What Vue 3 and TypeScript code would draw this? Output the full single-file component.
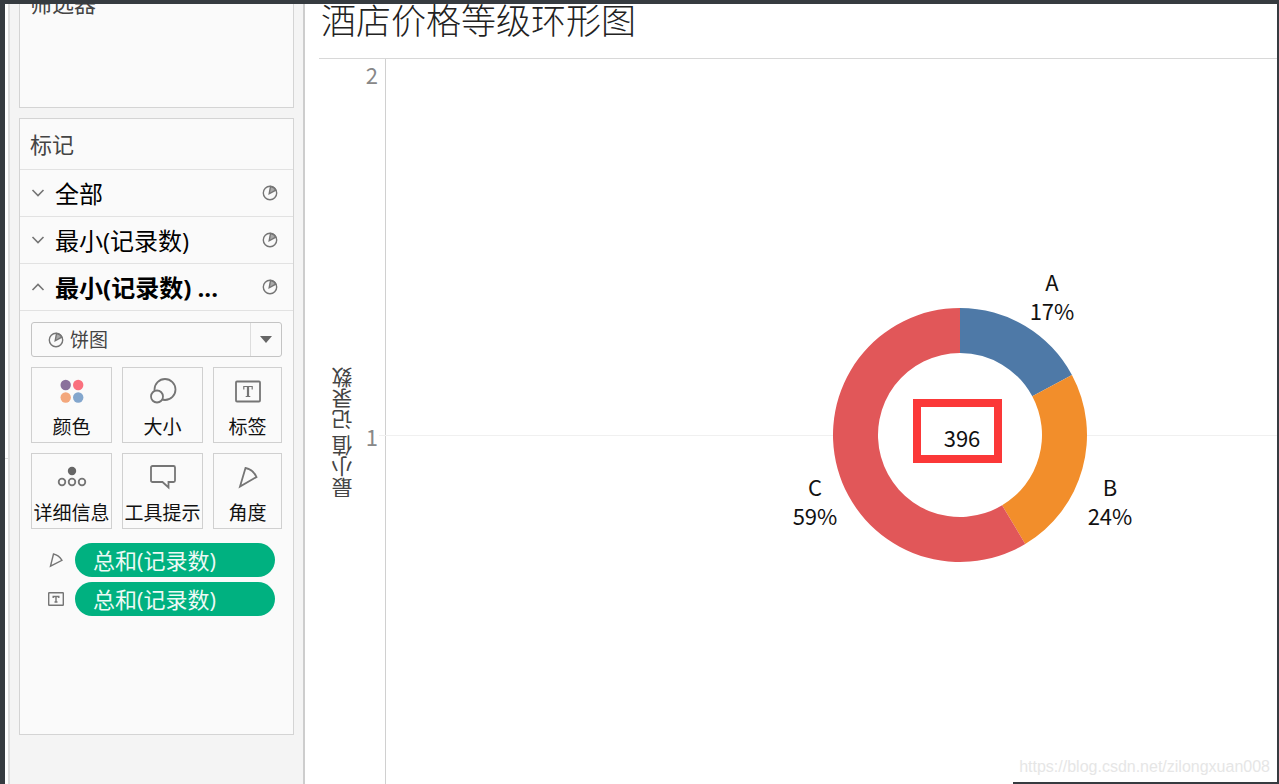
<script setup lang="ts">
import { ref } from 'vue'

interface Slice { name: string; count: number; color: string; x: number; y: number }
interface Shelf { id: number; label: string; open: boolean }
interface Tool { icon: string; label: string }

const shelves = ref<Shelf[]>([
  { id: 1, label: '全部', open: false },
  { id: 2, label: '最小(记录数)', open: false },
  { id: 3, label: '最小(记录数) ...', open: true },
])

const tools: Tool[] = [
  { icon: 'color', label: '颜色' },
  { icon: 'size', label: '大小' },
  { icon: 'label', label: '标签' },
  { icon: 'detail', label: '详细信息' },
  { icon: 'tooltip', label: '工具提示' },
  { icon: 'angle', label: '角度' },
]

const pills: Tool[] = [
  { icon: 'angle', label: '总和(记录数)' },
  { icon: 'label', label: '总和(记录数)' },
]

const markType = ref('pie')

const slices: Slice[] = [
  { name: 'A', count: 68, color: '#4e79a7', x: 92, y: -144 },
  { name: 'B', count: 96, color: '#f28e2b', x: 150, y: 61 },
  { name: 'C', count: 232, color: '#e15759', x: -145, y: 61 },
]
const total = slices.reduce((sum, s) => sum + s.count, 0)
const OUTER = 127
const INNER = 82

function point(radius: number, share: number): string {
  const a = share * Math.PI * 2
  return `${(radius * Math.sin(a)).toFixed(2)} ${(-radius * Math.cos(a)).toFixed(2)}`
}

let running = 0
const arcs = slices.map((s) => {
  const from = running / total
  running += s.count
  const to = running / total
  const large = to - from > 0.5 ? 1 : 0
  return {
    ...s,
    percent: `${Math.round((s.count / total) * 100)}%`,
    d: `M${point(OUTER, from)}A${OUTER} ${OUTER} 0 ${large} 1 ${point(OUTER, to)}L${point(INNER, to)}A${INNER} ${INNER} 0 ${large} 0 ${point(INNER, from)}Z`,
  }
})
</script>

<template>
  <div class="window">
    <div class="gutter"></div>
    <aside class="sidebar">
      <section class="card filters">
        <h2 class="card-title">筛选器</h2>
      </section>
      <section class="card marks">
        <h2 class="card-title">标记</h2>
        <button
          v-for="s in shelves"
          :key="s.id"
          type="button"
          class="shelf"
          :class="{ open: s.open }"
          :aria-expanded="s.open"
        >
          <svg class="chevron" viewBox="0 0 14 8" aria-hidden="true">
            <path :d="s.open ? 'M1.5 7 7 1.5 12.500 7' : 'M1.5 1 7 6.500 12.500 1'" />
          </svg>
          <span class="shelf-name">{{ s.label }}</span>
          <svg class="pie" viewBox="0 0 16 16" aria-hidden="true">
            <circle cx="8" cy="8" r="6.700" />
            <path class="wedge" d="M8.500 1.500 7.200 8.800 13.800 5.200A6.500 6.500 0 0 0 8.500 1.500Z" />
          </svg>
        </button>
        <div class="marks-body">
          <div class="type-picker">
            <svg class="pie" viewBox="0 0 16 16" aria-hidden="true">
              <circle cx="8" cy="8" r="6.700" />
              <path class="wedge" d="M8.500 1.500 7.200 8.800 13.800 5.200A6.500 6.500 0 0 0 8.500 1.500Z" />
            </svg>
            <select v-model="markType" aria-label="标记类型">
              <option value="pie">饼图</option>
            </select>
            <span class="arrow"><svg viewBox="0 0 12 7" aria-hidden="true"><path d="M0 0h12L6 7Z" /></svg></span>
          </div>
          <div class="tools">
            <button v-for="t in tools" :key="t.label" type="button" class="tool">
              <svg class="tool-icon" viewBox="0 0 30 28" aria-hidden="true">
                <g v-if="t.icon === 'color'" class="dots">
                  <circle cx="8.700" cy="8" r="5.200" fill="#8a719c" />
                  <circle cx="21.200" cy="8" r="5.200" fill="#fa707e" />
                  <circle cx="8.700" cy="20.500" r="5.200" fill="#f3a77c" />
                  <circle cx="21.200" cy="20.500" r="5.200" fill="#83a6cd" />
                </g>
                <g v-else-if="t.icon === 'size'">
                  <circle cx="17" cy="12.500" r="10.500" />
                  <circle class="cover" cx="9" cy="19.500" r="6" />
                </g>
                <g v-else-if="t.icon === 'label'">
                  <rect x="3" y="4.500" width="24" height="20" rx="1" />
                  <path class="thin" d="M10.800 12.500v-3h8.400v3M12.700 19.500h4.600" />
                  <path class="stem" d="M15 9.500v10" />
                </g>
                <g v-else-if="t.icon === 'detail'">
                  <circle class="solid" cx="15" cy="8" r="4.200" />
                  <circle cx="5" cy="19" r="3.300" />
                  <circle cx="15" cy="19" r="3.300" />
                  <circle cx="25" cy="19" r="3.300" />
                </g>
                <path v-else-if="t.icon === 'tooltip'" d="M4.500 3h21a1.500 1.500 0 0 1 1.500 1.500v13a1.500 1.500 0 0 1-1.500 1.500H20.500v5.500L14.500 19h-10A1.500 1.500 0 0 1 3 17.500v-13A1.500 1.500 0 0 1 4.500 3Z" />
                <path v-else d="M12.500 5 7 23.500 23.500 14C21.500 9.500 17.500 6 12.500 5Z" />
              </svg>
              <span>{{ t.label }}</span>
            </button>
          </div>
          <ul class="pills">
            <li v-for="p in pills" :key="p.icon">
              <svg class="pill-icon" viewBox="0 0 18 18" aria-hidden="true">
                <path v-if="p.icon === 'angle'" d="M6.500 3 3.500 15.200 15 9.300C13 6 10 3.800 6.500 3Z" />
                <g v-else>
                  <rect x="1.700" y="2.700" width="14.600" height="12.600" rx="0.500" />
                  <path d="M6.200 8V6.500h5.600V8M9 6.500v5.500M7.500 12h3" />
                </g>
              </svg>
              <button type="button" class="pill">{{ p.label }}</button>
            </li>
          </ul>
        </div>
      </section>
    </aside>
    <main class="sheet">
      <h1>酒店价格等级环形图</h1>
      <div class="chart">
        <div class="axis">
          <span class="axis-title">最小值 记录数</span>
          <span class="tick top">2</span>
          <span class="tick mid">1</span>
        </div>
        <div class="plot">
          <div class="gridline"></div>
          <svg class="donut" viewBox="-190 -170 380 340" role="img" aria-label="酒店价格等级环形图">
            <circle :r="INNER + 1" fill="#fff" />
            <path v-for="a in arcs" :key="a.name" :d="a.d" :fill="a.color" />
            <g v-for="a in arcs" :key="a.name">
              <text :x="a.x" :y="a.y">{{ a.name }}</text>
              <text :x="a.x" :y="a.y + 29">{{ a.percent }}</text>
            </g>
            <text x="2" y="12">{{ total }}</text>
            <rect class="highlight" x="-43" y="-32" width="81" height="56" />
          </svg>
        </div>
      </div>
    </main>
    <span class="watermark">https://blog.csdn.net/zilongxuan008</span>
    <div class="edge"></div>
  </div>
</template>

<style>
body { margin: 0; overflow: hidden; }
</style>

<style scoped>
* { box-sizing: border-box; }
.window {
  position: relative;
  display: flex;
  height: 100vh;
  overflow: hidden;
  border: solid #363b40;
  border-width: 4px 2px 0 5px;
  background: #fff;
  font-family: "Open Sans", "Noto Sans CJK SC", sans-serif;
  color: #111;
}
button, select { font: inherit; color: inherit; }
svg { flex: none; fill: none; stroke: #757575; }
.gutter {
  width: 3px;
  flex: none;
  background: linear-gradient(#ddd, #ddd) 0 454px / 3px 1px no-repeat;
}
.sidebar {
  flex: none;
  width: 297px;
  padding: 0 9px;
  border: solid #dedede;
  border-width: 0 2px;
  border-right-color: #cdcdcd;
  background: #f4f4f4;
}
.card {
  border: 1px solid #d4d4d4;
  background: #fafafa;
}
.card-title {
  margin: 0;
  padding-left: 10px;
  font-size: 22px;
  font-weight: 400;
  line-height: 50px;
  color: #444;
}
.filters { height: 104px; border-top: 0; overflow: hidden; }
.filters .card-title { line-height: 30px; margin-top: -16px; }
.marks { height: 617px; margin-top: 10px; }
.shelf {
  display: flex;
  align-items: center;
  width: 100%;
  height: 47px;
  padding: 0 15px 0 11px;
  border: 0;
  border-top: 1px solid #e2e2e2;
  background: none;
  font-size: 24px;
  color: #000;
}
.shelf.open { height: 48px; border-bottom: 1px solid #e2e2e2; font-weight: 700; }
.chevron { width: 14px; height: 8px; margin-right: 10px; stroke-width: 1.6; }
.shelf-name { flex: 1; padding-top: 2px; text-align: left; line-height: 34px; }
.pie { width: 16px; height: 16px; stroke-width: 1.4; }
.wedge { fill: #aaa; }
.marks-body { padding: 11px; }
.type-picker {
  display: flex;
  align-items: center;
  height: 35px;
  padding-left: 16px;
  border: 1px solid #c4c4c4;
  border-radius: 3px;
  font-size: 19px;
  color: #444;
}
.type-picker select {
  flex: 1;
  min-width: 0;
  height: 33px;
  margin-left: 6px;
  padding: 0;
  border: 0;
  appearance: none;
  background: none;
}
.arrow {
  display: grid;
  place-items: center;
  width: 31px;
  height: 100%;
  border-left: 1px solid #ddd;
}
.arrow svg { width: 12px; height: 7px; fill: #666; stroke: none; }
.tools {
  display: grid;
  grid-template-columns: 81px 81px 1fr;
  gap: 10px;
  margin-top: 10px;
}
.tool {
  display: flex;
  flex-direction: column;
  align-items: center;
  height: 76px;
  padding: 9px 0 0;
  border: 1px solid #d0d0d0;
  background: #fafafa;
  font-size: 19px;
  line-height: 28px;
  white-space: nowrap;
}
.tool-icon { width: 30px; height: 28px; margin-bottom: 8px; stroke-width: 1.8; }
.dots { stroke: none; }
.cover { fill: #fafafa; }
.solid { fill: #666; stroke: none; }
.thin { stroke-width: 1.2; }
.stem { stroke-width: 2.2; }
.pills {
  display: grid;
  gap: 5px;
  margin: 14px 7px 0 16px;
  padding: 0;
  list-style: none;
}
.pills li { display: flex; align-items: center; }
.pill-icon { width: 18px; height: 18px; margin-right: 10px; stroke-width: 1.4; }
.pill {
  flex: 1;
  height: 34px;
  padding: 0 18px;
  border: 0;
  border-radius: 17px;
  background: #00b180;
  font-size: 22px;
  line-height: 34px;
  text-align: left;
  color: #eefaf5;
}
.sheet {
  display: flex;
  flex: 1;
  flex-direction: column;
  min-width: 0;
  padding-left: 14px;
}
h1 {
  flex: none;
  height: 54px;
  margin: 0;
  padding-left: 2px;
  font-size: 35px;
  font-weight: 300;
  line-height: 34px;
  color: #222;
}
.chart { display: flex; flex: 1; border-top: 1px solid #d8d8d8; }
.axis {
  position: relative;
  width: 67px;
  border-right: 1px solid #d0d0d0;
  color: #888;
}
.axis-title {
  position: absolute;
  top: 374px;
  left: 10px;
  writing-mode: vertical-rl;
  transform: translateY(-50%) rotate(180deg);
  font-size: 21px;
  line-height: 28px;
  white-space: nowrap;
  color: #444;
}
.tick {
  position: absolute;
  right: 7px;
  font-family: "Noto Sans CJK SC", sans-serif;
  font-size: 22px;
  line-height: 28px;
}
.top { top: 1px; }
.mid { top: 363px; }
.plot { position: relative; flex: 1; }
.gridline {
  position: absolute;
  top: 376px;
  left: -7px;
  right: 0;
  height: 1px;
  background: #f0f0f0;
}
.donut {
  position: absolute;
  top: 376px;
  left: 64.4%;
  width: 380px;
  height: 340px;
  margin: -170px 0 0 -190px;
  stroke: none;
}
.donut text {
  fill: #111;
  font-family: "Noto Sans CJK SC", sans-serif;
  font-size: 22px;
  text-anchor: middle;
}
.highlight { stroke: #fb3838; stroke-width: 8; }
.watermark {
  position: absolute;
  right: 7px;
  bottom: 7px;
  font: 16px/20px "Liberation Sans", sans-serif;
  color: #e6e6e6;
}
.edge {
  position: absolute;
  right: 0;
  bottom: 0;
  width: 264px;
  height: 2px;
  background: #363b40;
}
</style>
